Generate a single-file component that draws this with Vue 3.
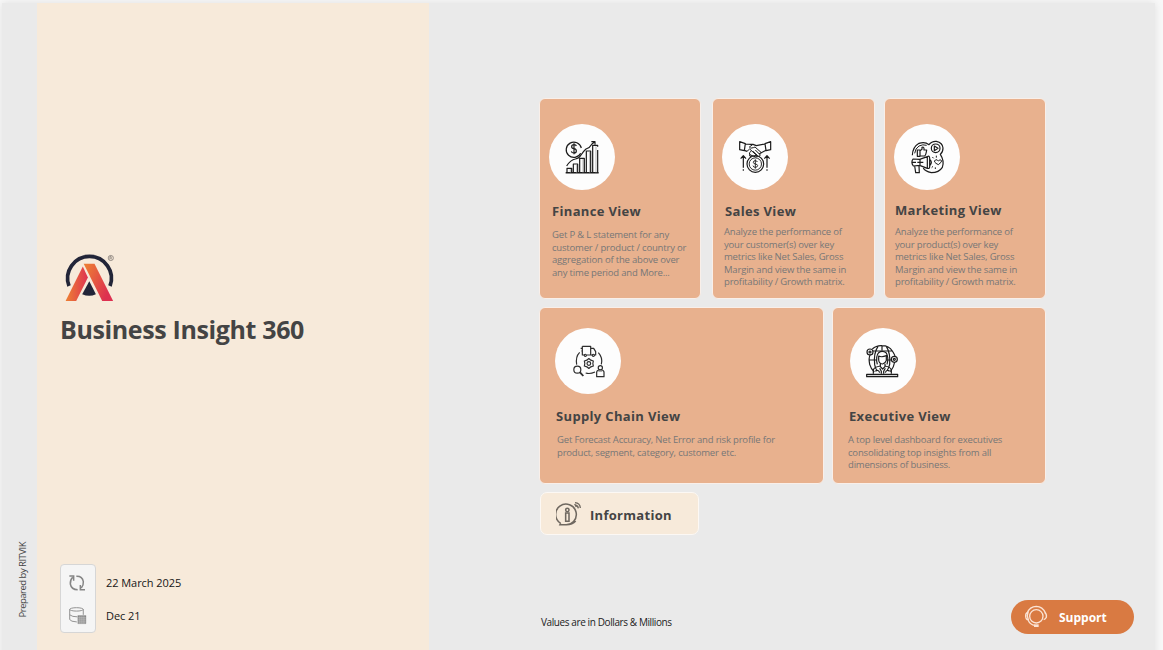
<script setup>
const cards = [
  {
    id: 'finance',
    title: 'Finance View',
    lines: ['Get P & L statement for any', 'customer / product / country or', 'aggregation of the above over', 'any time period and More...'],
  },
  {
    id: 'sales',
    title: 'Sales View',
    lines: ['Analyze the performance of', 'your customer(s) over key', 'metrics like Net Sales, Gross', 'Margin and view the same in', 'profitability / Growth matrix.'],
  },
  {
    id: 'marketing',
    title: 'Marketing View',
    lines: ['Analyze the performance of', 'your product(s) over key', 'metrics like Net Sales, Gross', 'Margin and view the same in', 'profitability / Growth matrix.'],
  },
  {
    id: 'supply',
    title: 'Supply Chain View',
    lines: ['Get Forecast Accuracy, Net Error and risk profile for', 'product, segment, category, customer etc.'],
  },
  {
    id: 'executive',
    title: 'Executive View',
    lines: ['A top level dashboard for executives', 'consolidating top insights from all', 'dimensions of business.'],
  },
]
const boxes = {
  finance: '57 102 198 198',
  sales: '51 102 198 198',
  marketing: '57 102 198 198',
  supply: '75 84 198 198',
  executive: '75 84 198 198',
}
const rows = [cards.slice(0, 3), cards.slice(3)]
</script>

<template>
  <div class="page">
    <div class="board">
      <aside class="rail"><span class="credit">Prepared by RITVIK</span></aside>
      <section class="brand">
        <svg class="logo" viewBox="60 250 60 54">
          <defs>
            <linearGradient id="legA" x1="0" x2="1"><stop offset="0.1" stop-color="#ec7a35" /><stop offset="0.95" stop-color="#df3650" /></linearGradient>
            <linearGradient id="legB" x1="0" y1="0" x2="1" y2="0.6"><stop offset="0.1" stop-color="#ec7a35" /><stop offset="0.95" stop-color="#dd3050" /></linearGradient>
          </defs>
          <path d="M69 286A21.9 21.9 0 1 1 110 286" fill="none" stroke="#222538" stroke-width="3.7" />
          <path d="M82.8 266.5L87.9 277.4L76.2 301H65.6Z" fill="url(#legA)" />
          <path d="M83.7 263.7H94.5L113.1 301H102.2Z" fill="url(#legB)" />
          <path d="M89.3 281.2L95.9 294.2Q89.3 297.2 82.2 294.2Z" fill="#222538" />
          <circle cx="110.8" cy="258" r="2.6" fill="none" stroke="#77706c" stroke-width="0.7" />
          <path d="M109.9 259.6V256.5H111.1Q112 257.3 111.1 258H109.9M111 258L112 259.6" fill="none" stroke="#77706c" stroke-width="0.6" />
        </svg>
        <h1>Business Insight 360</h1>
        <div class="meta">
          <div class="meta-icons">
            <svg class="refresh" viewBox="204 132 54 54" fill="none" stroke="#858585" stroke-width="4.5">
              <path d="M229 139Q247 138 250 155Q251 166 244 174M241 165V179H255M233 179Q214 179 211 162Q210 150 218 142M208 138H221V152" />
            </svg>
            <svg class="db" viewBox="204 228 56 56" fill="none" stroke="#8d8d8d" stroke-width="2.8">
              <ellipse cx="229" cy="238" rx="20" ry="5" />
              <path d="M209 238V268Q212 274 230 275M249 238V254M209 254Q216 260 232 260" />
              <path d="M233 256H257V280H233Z" fill="#858585" stroke-width="1" />
              <path d="M233 263H257M233 269H257M233 275H257M239 258V280M245 258V280M251 258V280" stroke="#dedede" stroke-width="1.4" />
            </svg>
          </div>
          <div class="dates"><span>22 March 2025</span><span>Dec 21</span></div>
        </div>
      </section>
      <main class="content">
        <div v-for="(row, i) in rows" :key="i" class="row" :class="'row-' + i">
          <article v-for="c in row" :key="c.id" class="card" :class="c.id">
            <div class="disc">
              <svg :viewBox="boxes[c.id]" fill="none" stroke="#1c1c1c" stroke-width="3.6" stroke-linejoin="round">
                <g v-if="c.id === 'finance'">
                  <path d="M152 190A23 23 0 1 1 154 174" />
                  <path d="M139 168Q138 164 132 164Q125 164 125 170Q125 175 132 176Q139 177 139 183Q139 189 132 189Q125 189 124 184M132 160V193" />
                  <path d="M110 228Q122 209 136 207Q148 205 153 195Q160 184 168 177Q180 173 186 162L193 156M184 155H195V164" />
                  <path d="M107 248H206" stroke-width="4.5" />
                  <path d="M121 237V247M140 225V247M159 207V247M179 186V247M198 169V247" stroke="#b9b9b9" stroke-width="3" />
                  <path d="M111 247V235H125V247M130 247V222H143V247M149 247V205H163V247M169 247V183H182V247M188 247V166H203V170M203 180V247" />
                </g>
                <g v-else-if="c.id === 'sales'">
                  <path d="M104 155V179L118 182L121 161ZM197 155V179L183 182L180 161ZM121 162Q135 164 144 163L154 167L180 162M118 181L126 184M183 181L167 189" />
                  <path d="M144 163L133 171Q136 177 145 173L150 171L168 187Q169 193 162 191M126 184L134 177L158 199Q153 203 147 199L134 194Q130 188 139 183M135 193Q131 199 138 200M151 180L166 195L161 201M144 184L158 197" stroke-width="3" />
                  <circle cx="151" cy="222" r="25" /><circle cx="151" cy="222" r="18.5" stroke-width="2.8" />
                  <path d="M157 216Q156 212 151 212Q145 212 145 217Q145 221 151 222Q158 223 158 227Q157 232 151 232Q145 232 144 227M151 208V236" stroke-width="2.7" />
                  <path d="M115 233V198M107 206L115 197L123 206M186 233V198M178 206L186 197L194 206M115 238V242M186 238V242" />
                </g>
                <g v-else-if="c.id === 'marketing'">
                  <path d="M112 196Q113 171 132 160Q150 154 162 164Q170 153 184 154Q203 158 204 174Q204 187 196 193Q209 213 202 232Q192 248 169 248Q150 244 145 234" />
                  <path d="M119 190Q121 175 132 168Q143 162 155 166" stroke-width="3" />
                  <circle cx="182" cy="175" r="13" /><path d="M178 168L189 175L178 182Z" />
                  <path d="M127 180H135V199H127ZM135 182L141 178V172Q148 169 147 180H155Q153 195 149 198H135" />
                  <path d="M114 207L134 208L157 200V235L134 226L115 228Q107 217 114 207ZM135 208V226M157 200Q163 196 164 204V231Q163 238 157 234M165 209Q173 217 165 226M119 228L122 248H133L132 228M109 217H123M127 217H145" />
                  <path d="M190 224Q173 216 181 210Q187 207 190 213Q195 206 200 212Q201 216 190 224ZM172 201L176 205M184 197V203M170 233L174 229M181 237V232" stroke-width="3" />
                </g>
                <g v-else-if="c.id === 'supply'" stroke="#2e2e2e">
                  <path d="M157 139H182V165H171M164 165H157V139M182 145H191L197 155V165H193M187 165H181M152 145H157M154 153H157" />
                  <circle cx="166" cy="166" r="3.3" /><circle cx="190" cy="166" r="3.3" />
                  <path d="M149 157Q136 170 140 194M205 158Q219 173 214 193M167 219Q180 223 195 216" />
                  <path d="M176.500 175.500L182.500 180.500L190 183L188.500 190.500L190 198L182.500 200.500L176.500 205.500L170.500 200.500L163 198L164.500 190.500L163 183L170.500 180.500Z" />
                  <circle cx="176.500" cy="190.500" r="5.500" />
                  <circle cx="142" cy="209" r="10.5" /><path d="M150 217L160 228" stroke-width="5.5" />
                  <circle cx="211" cy="203" r="6.3" /><path d="M200 230V217Q200 210 209 210H215Q222 211 222 217V230Z" /><path d="M205 213H217" stroke="#777" />
                </g>
                <g v-else>
                  <path d="M142 147Q154 136 171 137Q192 137 202 153Q211 167 210 171M136 163Q130 175 134 193Q138 207 148 216M209 186Q207 201 196 215M143 153H202M131 180H155M187 180H201M159 139Q145 160 149 194Q151 205 155 210M184 139Q197 160 194 193Q191 205 187 210M171 137V151" />
                  <circle cx="135" cy="156" r="9" /><circle cx="135" cy="156" r="3" /><circle cx="208" cy="178" r="9" /><circle cx="208" cy="178" r="3" />
                  <path d="M157 193Q151 169 161 158Q172 150 184 159Q192 174 186 193M161 168Q170 173 184 167V181Q181 190 173 192Q162 191 161 180ZM166 191V200L173 207L180 200V191" />
                  <path d="M145 221V209Q148 201 166 198M180 198Q197 201 199 210V221M164 205L169 214V221M181 205L176 214V221M151 214Q160 207 164 218M194 214Q185 207 181 218" />
                  <path d="M125 223H218V230H125Z" fill="#d6d6d6" />
                </g>
              </svg>
            </div>
            <h2>{{ c.title }}</h2>
            <p><span v-for="(l, n) in c.lines" :key="n">{{ l }}</span></p>
          </article>
        </div>
        <button class="info">
          <svg viewBox="78 48 78 78" fill="none" stroke="#6f6860" stroke-width="4.6">
            <path d="M92 115A31 31 0 1 1 103 119M92 115L90 119H103Q126 121 137 108" />
            <circle cx="112" cy="75" r="5" /><path d="M107 84H117V109H107Z" />
            <path d="M135 53Q150 54 151 69M135 60Q144 61 145 70M139 66L134 57" stroke-width="4" />
          </svg>
          <span>Information</span>
        </button>
        <footer>
          <span class="note">Values are in Dollars &amp; Millions</span>
          <button class="support">
            <svg viewBox="72 45 72 72" fill="none" stroke="#fbe3d4" stroke-width="4">
              <circle cx="109" cy="79" r="20" />
              <path d="M82 68Q89 50 109 49Q128 50 136 68M84 90Q91 105 104 106" />
              <path d="M84 67Q76 69 77 79Q78 90 85 89L82 78ZM134 67Q141 72 139 82Q135 88 131 89" />
              <path d="M102 107H116" stroke-width="8" />
            </svg>
            <span>Support</span>
          </button>
        </footer>
      </main>
    </div>
  </div>
</template>

<style>
body { background: #f8f8f8; overflow: hidden; }
</style>
<style scoped>
* { box-sizing: border-box; }
.page { height: 650px; padding: 3px 8px 0 2px; overflow: hidden; font-family: "Open Sans", "Noto Sans", sans-serif; color: #444; }
.board { display: flex; width: 1153px; height: 660px; background: #eaeaea; box-shadow: 0 0 8px rgba(0, 0, 0, .1); }
h1, h2, p { margin: 0; white-space: nowrap; }
.rail { width: 35px; display: flex; align-items: flex-start; padding: 539px 0 0 14px; }
.credit { writing-mode: vertical-rl; transform: rotate(180deg); font-size: 9.5px; line-height: 14px; letter-spacing: -.5px; color: #444; white-space: nowrap; }
.brand { width: 392px; background: #f7eada; padding: 247px 0 0 23px; }
.logo { display: block; width: 60px; height: 54px; }
h1 { margin-top: 8px; font-size: 25px; line-height: 34px; font-weight: 700; letter-spacing: -.37px; }
.meta { display: flex; margin-top: 218px; }
.meta-icons { width: 36px; height: 69px; border: 1px solid #d6d6d6; border-radius: 4px; background: #f5f5f5; padding: 9px 0 0 7px; }
.meta-icons svg { display: block; width: 18px; height: 18px; }
.meta-icons .db { margin-top: 14px; width: 19px; height: 19px; }
.dates { display: flex; flex-direction: column; gap: 17px; padding: 11px 0 0 10px; color: #161616; font-size: 11px; line-height: 16px; letter-spacing: -.06px; }
.content { width: 726px; padding: 95px 0 0 110px; }
.row { display: flex; }
.card { height: 201px; border: 1px solid #f9efe9; border-radius: 6px; background: #e8b18e; padding: 25px 0 0 9px; }
.finance { width: 162px; }
.sales { width: 163px; margin-left: 11px; }
.marketing { width: 162px; margin-left: 9px; }
.row-1 { margin-top: 8px; }
.row-1 .card { height: 177px; padding: 20px 0 0 15px; }
.row-1 .supply { width: 285px; }
.row-1 .executive { width: 214px; margin-left: 8px; padding-left: 17px; }
.disc { width: 66px; height: 66px; border-radius: 50%; background: #fdfdfd; }
.disc svg { display: block; width: 66px; height: 66px; }
h2 { font-size: 13px; line-height: 18px; font-weight: 700; letter-spacing: .34px; margin: 12px 0 0 3px; }
p { font-size: 9.5px; line-height: 12.5px; letter-spacing: -.18px; color: #777; margin: 9px 0 0 3px; }
p span { display: block; }
.sales p { margin: 6px 0 0 2px; }
.marketing h2 { margin: 11px 0 0 1px; }
.marketing p { margin: 7px 0 0 1px; }
.supply h2 { margin: 13px 0 0 1px; }
.supply p { margin-left: 2px; }
.executive h2 { margin: 13px 0 0 -1px; }
.executive p { margin-left: -2px; }
button { font-family: inherit; padding: 0; margin: 0; }
.info { display: flex; align-items: center; width: 159px; height: 43px; margin: 8px 0 0 1px; border: 1px solid #fcf8f4; border-radius: 7px; background: #f7eada; padding-left: 15px; color: #444; font-size: 13px; font-weight: 700; letter-spacing: .29px; }
.info svg { width: 26px; height: 26px; margin-right: 8px; }
.info span { padding-top: 2px; }
footer { display: flex; align-items: flex-start; justify-content: space-between; width: 593px; margin: 65px 0 0 2px; }
.note { font-size: 10px; line-height: 14px; margin-top: 15px; color: #222; letter-spacing: -.4px; white-space: nowrap; }
.support { display: flex; align-items: center; width: 123px; height: 34px; border: 0; border-radius: 17px; background: #d97a42; color: #fff; font-size: 12px; font-weight: 700; padding-left: 13px; }
.support svg { width: 24px; height: 24px; margin-right: 11px; }
</style>
